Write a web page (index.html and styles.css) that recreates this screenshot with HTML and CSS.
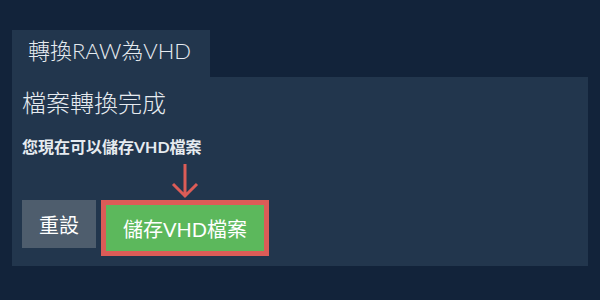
FILE: index.html
```html
<!DOCTYPE html>
<html lang="zh-Hant">
<head>
<meta charset="UTF-8">
<meta name="viewport" content="width=device-width, initial-scale=1.0">
<title>轉換RAW為VHD</title>
<link rel="stylesheet" href="styles.css">
</head>
<body>
<div class="tab">轉換RAW為VHD</div>
<div class="panel">
  <h1 class="title">檔案轉換完成</h1>
  <p class="note">您現在可以儲存VHD檔案</p>
  <svg class="hint" width="28" height="36" viewBox="0 0 28 36">
    <path d="M14 1 V33 M2 21 L14 33 L26 21" fill="none" stroke="#dc5c57" stroke-width="3"/>
  </svg>
  <div class="actions">
    <button class="btn reset">重設</button>
    <button class="btn save">儲存VHD檔案</button>
  </div>
</div>
</body>
</html>
```
FILE: styles.css
```css
body {
  margin: 0;
  padding: 30px 12px 34px;
  background-color: #12233a;
  font-family: Lato, "Noto Sans CJK TC", sans-serif;
  color: #e6ebf0;
}
.tab {
  display: inline-block;
  height: 41px;
  line-height: 41px;
  padding: 0 19px 6px 16px;
  background: #22364d;
  font-size: 22px;
  font-weight: 300;
}
.panel {
  background: #22364d;
  padding: 11px 10px 10px;
}
.title {
  margin: 0;
  font-size: 24px;
  font-weight: 300;
  line-height: 30px;
}
.note {
  margin: 19px 0 0;
  font-size: 16px;
  font-weight: bold;
  line-height: 20px;
}
.hint {
  display: block;
  margin: 6px 0 1px 149px;
}
.actions {
  display: flex;
  align-items: flex-start;
  gap: 5px;
}
.btn {
  border: none;
  color: #fff;
  font-family: inherit;
  font-size: 20px;
  cursor: pointer;
}
.reset {
  height: 48px;
  padding: 0 17px;
  background: #4e5d6d;
}
.save {
  height: 56px;
  padding: 0 17px;
  background: #5cb85c;
  border: 5px solid #dc5c57;
}
```
